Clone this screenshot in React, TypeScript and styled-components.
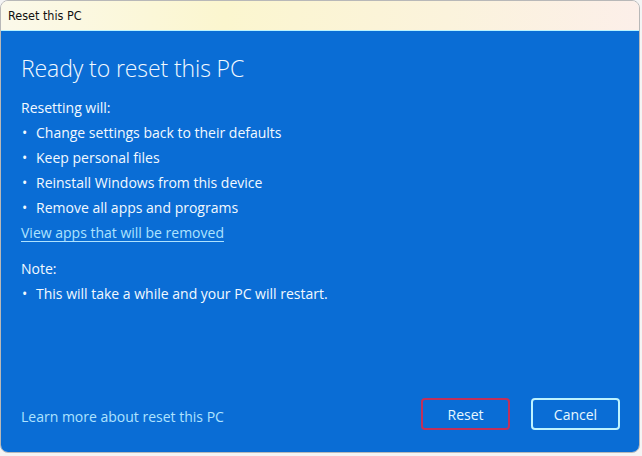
import React from 'react'
import styled, { createGlobalStyle } from 'styled-components'

const GlobalStyle = createGlobalStyle`
  html, body {
    margin: 0;
    padding: 0;
    background: #f4f4f4;
  }
  body {
    font-family: 'Open Sans', 'Noto Sans', sans-serif;
  }
`

const Window = styled.div`
  width: 640px;
  height: 453px;
  display: flex;
  flex-direction: column;
  border: 1px solid #b8b8b8;
  border-radius: 8px;
  overflow: hidden;
  box-sizing: border-box;
`

const TitleBar = styled.div`
  height: 29px;
  flex: none;
  display: flex;
  align-items: center;
  padding-left: 7px;
  background: linear-gradient(90deg, #fbf9ea 0%, #fbf6cf 35%, #fbf3dc 70%, #fcefe9 100%);
  border-bottom: 1px solid #b9f3ff;
  font-family: 'Liberation Sans Narrow', 'DejaVu Sans Condensed', sans-serif;
  font-stretch: condensed;
  font-size: 12.5px;
  color: #111;
`

const Body = styled.div`
  flex: 1;
  display: flex;
  flex-direction: column;
  background: #0a6dd5;
  color: #f2f9ff;
  padding: 20px 19px 22px 20px;
`

const Heading = styled.h1`
  margin: 0 0 10px;
  font-weight: 300;
  font-size: 23px;
  line-height: 34px;
  letter-spacing: -0.1px;
`

const Text = styled.div`
  font-size: 14px;
  line-height: 25px;
`

const List = styled.ul`
  margin: 0;
  padding: 0;
  list-style: none;
`

const Item = styled.li`
  font-size: 14px;
  line-height: 25px;
  display: flex;

  &::before {
    content: '•';
    width: 14px;
    padding-left: 1px;
    flex: none;
  }
`

const Link = styled.a<{ $underline?: boolean }>`
  font-size: 14px;
  line-height: 25px;
  color: #aee3ff;
  text-decoration: ${(p) => (p.$underline ? 'underline' : 'none')};
  text-underline-offset: 3px;
  text-decoration-thickness: 1px;
`

const FooterLink = styled(Link)`
  padding-top: 5px;
`

const Note = styled(Text)`
  margin-top: 11px;
`

const Footer = styled.div`
  margin-top: auto;
  display: flex;
  align-items: center;
`

const Spacer = styled.div`
  flex: 1;
`

const Button = styled.button<{ $variant: 'reset' | 'cancel' }>`
  width: 89px;
  height: 32px;
  box-sizing: border-box;
  background: transparent;
  border-radius: 4px;
  border: 2px solid ${(p) => (p.$variant === 'reset' ? '#c1305a' : '#bdf3ff')};
  color: #e6f8ff;
  font-family: 'Open Sans', 'Noto Sans', sans-serif;
  font-size: 14px;
  margin-left: ${(p) => (p.$variant === 'cancel' ? '21px' : '0')};
`

export default function App() {
  return (
    <>
      <GlobalStyle />
      <Window>
        <TitleBar>Reset this PC</TitleBar>
        <Body>
          <Heading>Ready to reset this PC</Heading>
          <Text>Resetting will:</Text>
          <List>
            <Item>Change settings back to their defaults</Item>
            <Item>Keep personal files</Item>
            <Item>Reinstall Windows from this device</Item>
            <Item>Remove all apps and programs</Item>
          </List>
          <div>
            <Link href="#" $underline>
              View apps that will be removed
            </Link>
          </div>
          <Note>Note:</Note>
          <List>
            <Item>This will take a while and your PC will restart.</Item>
          </List>
          <Footer>
            <FooterLink href="#">Learn more about reset this PC</FooterLink>
            <Spacer />
            <Button $variant="reset">Reset</Button>
            <Button $variant="cancel">Cancel</Button>
          </Footer>
        </Body>
      </Window>
    </>
  )
}
